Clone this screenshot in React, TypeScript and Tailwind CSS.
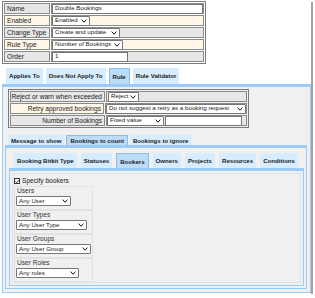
import React from "react";

const Chevron = () => (
  <svg width="6" height="4" viewBox="0 0 6 4" className="shrink-0">
    <path d="M0.6 0.6 L3 3.2 L5.4 0.6" fill="none" stroke="#111" strokeWidth="1" />
  </svg>
);

function Sel({ text, className = "" }: { text: string; className?: string }) {
  return (
    <div
      className={
        "flex items-center justify-between bg-white border border-[#767676] rounded-[1px] pl-[2px] pr-[2px] h-[10px] shrink-0 text-[6.2px] " +
        className
      }
    >
      <span className="whitespace-nowrap leading-none">{text}</span>
      <Chevron />
    </div>
  );
}

function Inp({ text = "", className = "" }: { text?: string; className?: string }) {
  return (
    <div
      className={
        "flex items-center bg-white border border-[#767676] pl-[2px] h-[10px] shrink-0 text-[6.2px] " + className
      }
    >
      <span className="whitespace-nowrap leading-none">{text}</span>
    </div>
  );
}

function Tab({ label, active = false }: { label: string; active?: boolean }) {
  return (
    <div
      className={
        "flex items-center px-[3px] h-full font-bold text-[6.1px] whitespace-nowrap " +
        (active
          ? "bg-[#bcdcf8] border border-b-0 border-[#88bdee]"
          : "bg-[#d7ecfd]")
      }
    >
      {label}
    </div>
  );
}

const GRAY = "bg-[#e7e7e7]";
const CREAM = "bg-[#fff8e9]";

function Row({
  label,
  bg,
  labelW,
  right = false,
  children,
}: {
  label: string;
  bg: string;
  labelW: string;
  right?: boolean;
  children?: React.ReactNode;
}) {
  return (
    <div className="flex gap-[1px] h-[11px]">
      <div
        className={
          "flex items-center border border-[#8a8a8a] px-[2px] whitespace-nowrap " +
          labelW +
          " " +
          bg +
          (right ? " justify-end" : "")
        }
      >
        {label}
      </div>
      <div className={"flex-1 flex items-center gap-[1px] border border-[#8a8a8a] " + bg}>
        {children}
      </div>
    </div>
  );
}

function Group({ label, sel }: { label: string; sel: React.ReactNode }) {
  return (
    <div className="w-[79px] h-[24px] border border-[#e2e2e2] flex flex-col pl-[1px]">
      <div className="h-[8px] leading-[8px] text-[#333] pl-[1px]">{label}</div>
      <div className="mt-[1px]">{sel}</div>
    </div>
  );
}

export default function App() {
  return (
    <div className="w-[311px] h-[294px] bg-white shadow-[2px_2px_0_#a3a3a3] flex flex-col font-['Liberation_Sans',Arial,sans-serif] text-[6.6px] text-[#222]">
      {/* top table */}
      <div className="mt-[1px] ml-[2px] w-[204px] border border-[#7a7a7a] p-[1px] flex flex-col gap-[1px]">
        <Row label="Name" bg={GRAY} labelW="w-[46px]">
          <Inp text="Double Bookings" className="flex-1" />
        </Row>
        <Row label="Enabled" bg={CREAM} labelW="w-[46px]">
          <Sel text="Enabled" className="w-[38px]" />
        </Row>
        <Row label="Change Type" bg={GRAY} labelW="w-[46px]">
          <Sel text="Create and update" className="w-[68px]" />
        </Row>
        <Row label="Rule Type" bg={CREAM} labelW="w-[46px]">
          <Sel text="Number of Bookings" className="w-[71px]" />
        </Row>
        <Row label="Order" bg={GRAY} labelW="w-[46px]">
          <Inp text="1" className="w-[76px]" />
        </Row>
      </div>

      {/* tabs 1 */}
      <div className="mt-[4px] ml-[6px] h-[16px] flex items-stretch gap-[3px]">
        <Tab label="Applies To" />
        <Tab label="Does Not Apply To" />
        <Tab label="Rule" active />
        <Tab label="Rule Validator" />
      </div>

      {/* panel 1 */}
      <div className="ml-[2px] w-[309px] h-[209px] border border-t-[3px] border-[#9ccbf7] bg-[#f0f0f0] flex flex-col px-[2px]">
        <div className="mt-[2px] ml-[3px] w-[241px] border border-[#7a7a7a] p-[1px] flex flex-col gap-[1px]">
          <Row label="Reject or warn when exceeded" bg={GRAY} labelW="w-[95px]" right>
            <Sel text="Reject" className="w-[31px] ml-[1px]" />
          </Row>
          <Row label="Retry approved bookings" bg={CREAM} labelW="w-[95px]" right>
            <Sel text="Do not suggest a retry as a booking request" className="w-[140px]" />
          </Row>
          <Row label="Number of Bookings" bg={GRAY} labelW="w-[95px]" right>
            <Sel text="Fixed value" className="w-[57px]" />
            <Inp className="w-[77px]" />
          </Row>
        </div>

        {/* tabs 2 */}
        <div className="mt-[7px] ml-[3px] h-[14px] flex items-stretch gap-[2px]">
          <Tab label="Message to show" />
          <Tab label="Bookings to count" active />
          <Tab label="Bookings to ignore" />
        </div>

        {/* panel 2 */}
        <div className="w-[302px] flex-1 mb-[3px] border border-t-[3px] border-[#9ccbf7] bg-[#f0f0f0] flex flex-col px-[2px] pb-[2px]">
          <div className="mt-[5px] ml-[6px] h-[15px] flex items-stretch gap-[4px]">
            <Tab label="Booking Bitkit Type" />
            <Tab label="Statuses" />
            <Tab label="Bookers" active />
            <Tab label="Owners" />
            <Tab label="Projects" />
            <Tab label="Resources" />
            <Tab label="Conditions" />
          </div>

          {/* panel 3 */}
          <div className="ml-[1px] w-[295px] flex-1 border border-t-[3px] border-[#9ccbf7] bg-[#f0f0f0] p-[2px] flex">
            <div className="flex-1 border border-[#e2e2e2] flex flex-col pl-[1px] pt-[3px]">
              <div className="flex items-center h-[8px] gap-[1px]">
                <div className="w-[6px] h-[6px] border border-[#333] bg-white flex items-center justify-center">
                  <svg width="5" height="5" viewBox="0 0 5 5">
                    <path d="M0.6 2.6 L2 4 L4.6 0.8" fill="none" stroke="#111" strokeWidth="1" />
                  </svg>
                </div>
                <span className="ml-[1px]">Specify bookers</span>
              </div>
              <div className="mt-[1px] flex flex-col">
                <Group label="Users" sel={<Sel text="Any User" className="w-[55px]" />} />
                <Group label="User Types" sel={<Sel text="Any User Type" className="w-[71px]" />} />
                <Group label="User Groups" sel={<Sel text="Any User Group" className="w-[75px]" />} />
                <Group label="User Roles" sel={<Sel text="Any roles" className="w-[63px]" />} />
              </div>
            </div>
          </div>
        </div>
      </div>
    </div>
  );
}
